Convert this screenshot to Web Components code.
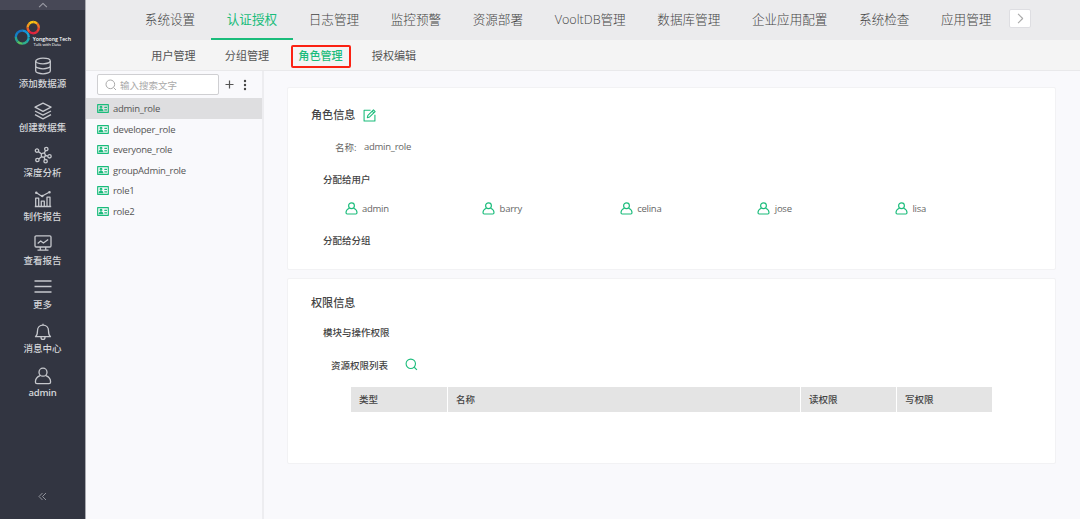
<!DOCTYPE html>
<html lang="zh-CN">
<head>
<meta charset="utf-8">
<title>角色管理</title>
<style>
  body {
    margin: 0;
    width: 1080px;
    height: 519px;
    overflow: hidden;
    display: flex;
    background: #f9f9fc;
    color: #666;
    font-family: "Open Sans", "Noto Sans CJK SC", sans-serif;
    font-size: 9.5px;
    --green: #1abc7b;
  }
  .main {
    flex: 1;
    min-width: 0;
    display: flex;
    flex-direction: column;
  }
  .body {
    flex: 1;
    display: flex;
  }
  .content {
    flex: 1;
    display: flex;
    flex-direction: column;
    gap: 8px;
    padding: 16px 24px 0 23px;
  }
</style>
</head>
<body>
<side-bar>
  <side-item icon="database">添加数据源</side-item>
  <side-item icon="layers">创建数据集</side-item>
  <side-item icon="network">深度分析</side-item>
  <side-item icon="chart">制作报告</side-item>
  <side-item icon="monitor">查看报告</side-item>
  <side-item icon="menu">更多</side-item>
  <side-item icon="bell">消息中心</side-item>
  <side-item icon="user" latin>admin</side-item>
</side-bar>
<div class="main">
  <top-nav>
    <nav-tab>系统设置</nav-tab>
    <nav-tab active>认证授权</nav-tab>
    <nav-tab>日志管理</nav-tab>
    <nav-tab>监控预警</nav-tab>
    <nav-tab>资源部署</nav-tab>
    <nav-tab>VooltDB管理</nav-tab>
    <nav-tab>数据库管理</nav-tab>
    <nav-tab>企业应用配置</nav-tab>
    <nav-tab>系统检查</nav-tab>
    <nav-tab>应用管理</nav-tab>
  </top-nav>
  <sub-nav>
    <sub-tab>用户管理</sub-tab>
    <sub-tab>分组管理</sub-tab>
    <sub-tab active>角色管理</sub-tab>
    <sub-tab>授权编辑</sub-tab>
  </sub-nav>
  <div class="body">
    <role-list placeholder="输入搜索文字">
      <role-item active>admin_role</role-item>
      <role-item>developer_role</role-item>
      <role-item>everyone_role</role-item>
      <role-item>groupAdmin_role</role-item>
      <role-item>role1</role-item>
      <role-item>role2</role-item>
    </role-list>
    <div class="content">
      <info-card style="height: 181px">
        <card-row level="1" icon="edit" style="height: 52px">角色信息</card-row>
        <card-field label="名称:">admin_role</card-field>
        <card-row level="2" style="height: 36px; margin-top: 8px">分配给用户</card-row>
        <user-grid>
          <user-chip>admin</user-chip>
          <user-chip>barry</user-chip>
          <user-chip>celina</user-chip>
          <user-chip>jose</user-chip>
          <user-chip>lisa</user-chip>
        </user-grid>
        <card-row level="2" style="height: 42px">分配给分组</card-row>
      </info-card>
      <info-card style="height: 184px">
        <card-row level="1" style="height: 46px">权限信息</card-row>
        <card-row level="2" style="height: 14px">模块与操作权限</card-row>
        <card-row level="3" icon="search" style="height: 45px; margin-top: 3px">资源权限列表</card-row>
        <perm-table columns="类型,名称,读权限,写权限"></perm-table>
      </info-card>
    </div>
  </div>
</div>

<script>
const ICONS = {
  database: `<ellipse cx="9" cy="4" rx="7.3" ry="2.8"/><path d="M1.7 4v10c0 1.5 3.3 2.8 7.3 2.8s7.3-1.3 7.3-2.8V4M1.7 9c0 1.5 3.3 2.8 7.3 2.8s7.3-1.3 7.3-2.8"/>`,
  layers: `<path d="M9 1.2 17 5.2 9 9.3 1 5.2zM1 9l8 4.1L17 9M1 12.7l8 4.1 8-4.1"/>`,
  network: `<circle cx="9.3" cy="9.2" r="2"/><circle cx="3" cy="4.6" r="1.7"/><circle cx="12.3" cy="3" r="1.7"/><circle cx="15.5" cy="10.3" r="1.7"/><circle cx="11.6" cy="15.2" r="1.7"/><circle cx="3.4" cy="14" r="1.7"/><path d="m4.4 5.6 3.3 2.4M10.1 7.4l1.5-2.8M11.3 9.5l2.5.5M10.1 11.1l.8 2.5M7.8 10.5 4.7 12.9"/>`,
  chart: `<path d="M1.7 16.5V8.2h3v8.3M7.3 16.5v-5.3h3v5.3M13 16.5V7.2h3v9.3M.8 16.5h16.4M2 2.5 7.8 6.3 15.6 2"/><circle cx="2.3" cy="2.8" r=".6"/><circle cx="8.3" cy="6" r=".6"/><circle cx="15.5" cy="2.2" r=".6"/>`,
  monitor: `<rect x="1" y="1.8" width="16" height="11.2" rx="1.2"/><path d="m3.7 9.5 3-2.5 2.7 2 4.8-3.6M6.3 13v3M11.7 13v3M3.5 16.2h11"/>`,
  menu: `<path d="M.5 3h17M.5 8.5h17M.5 14h17"/>`,
  bell: `<path d="M1.5 13.7c2-1.5 2-3.3 2-6C3.5 4.5 5.7 2.2 9 2.2s5.5 2.3 5.5 5.5c0 2.7 0 4.500 2 6zM7 14.2c0 3 4 3 4 0M9 .8v1.3"/>`,
  user: `<circle cx="9" cy="5.2" r="4"/><path d="M6.2 8.7C3.3 9.700 1.4 12 1.4 15c0 1 .6 1.6 1.6 1.6h12c1 0 1.6-.6 1.6-1.6 0-3-1.9-5.300-4.800-6.300"/>`,
  search: `<circle cx="8" cy="8" r="6.5"/><path d="m12.8 12.8 3.7 3.7"/>`,
  edit: `<path d="M10.5 1.8H1.5v14.7h15V8M6 12l.8-3.3L14.5 1.2l2.3 2.3L9.2 11z"/><path d="m12.7 3 2.300 2.300"/>`,
  card: `<rect x="1" y="1" width="16" height="11.5"/><circle cx="6" cy="4.8" r="1.3"/><path d="M3.2 10c0-2.7 5.6-2.7 5.6 0zM11 5h4M11 8.8h4"/>`,
  plus: `<path d="M9 1v16M1 9h16"/>`,
  up: `<path d="m2 13 7-7 7 7"/>`,
  right: `<path d="m5 1.5 7.5 7.5L5 16.5"/>`,
  collapse: `<path d="M9 2 2 9l7 7M16 2 9 9l7 7"/>`
};

function icon(name, width, stroke, height) {
  const box = name === "card" ? "0 0 18 13.5" : "0 0 18 18";
  return `<svg width="${width}" height="${height || width}" viewBox="${box}" fill="none"
    stroke="currentColor" stroke-width="${stroke}" stroke-linejoin="round">${ICONS[name]}</svg>`;
}

// Ring made of equal coloured arcs, clockwise from the right
function ring(cx, cy, r, colors) {
  return colors.map((color, i) =>
    `<circle cx="${cx}" cy="${cy}" r="${r}" stroke="${color}" pathLength="${colors.length}"
      stroke-dasharray="1.03 ${colors.length - 1.03}" stroke-dashoffset="${-i}"/>`
  ).join("");
}

// Shared base: every element only supplies its template
class BaseElement extends HTMLElement {
  constructor() {
    super();
    this.attachShadow({ mode: "open" });
  }
  connectedCallback() {
    this.shadowRoot.innerHTML = this.template();
  }
}

class SideBar extends BaseElement {
  template() {
    return `
      <style>
        :host {
          box-sizing: border-box;
          width: 86px;
          height: 519px;
          flex: none;
          display: flex;
          flex-direction: column;
          background: #323541;
          border-right: 1px solid #a9aab0;
          color: #d4d5d9;
        }
        .fold {
          height: 9.5px;
          display: flex;
          align-items: center;
          justify-content: center;
          background: #474856;
          color: #9a9ba4;
        }
        .logo { height: 44.7px; }
        .logo svg { display: block; }
        .items { flex: 1; }
        .collapse {
          height: 45px;
          display: flex;
          justify-content: center;
          align-items: center;
          color: #a3a5ac;
        }
      </style>
      <div class="fold">${icon("up", 10, 2)}</div>
      <div class="logo">
        <svg width="85" height="44" viewBox="0 9.5 85 44" fill="none" stroke-width="2.4">
          ${ring(33.2, 27.1, 5.6, ["#e8402f", "#e02a3c", "#e0203f", "#ee5a2a", "#f59a1e", "#fbc512", "#fbb914", "#f0702a"])}
          ${ring(22.3, 36.6, 6.5, ["#19a7b5", "#2fb08f", "#55bf62", "#2aa58c", "#1480c4", "#1274c8", "#1590d6", "#19a9d8"])}
          <g fill="#fff" stroke="none" font-family="Open Sans, sans-serif">
            <text x="32.8" y="40.3" font-size="6" font-weight="600" textLength="38.2" lengthAdjust="spacingAndGlyphs">Yonghong Tech</text>
            <text x="33.5" y="45.8" font-size="4.3" textLength="27.5">Talk with Data</text>
          </g>
        </svg>
      </div>
      <div class="items"><slot></slot></div>
      <div class="collapse">${icon("collapse", 9, 1.7)}</div>
    `;
  }
}

class SideItem extends BaseElement {
  template() {
    return `
      <style>
        :host {
          display: flex;
          flex-direction: column;
          align-items: center;
          height: 44.2px;
          padding-top: 3.3px;
          box-sizing: border-box;
        }
        svg { display: block; color: #c6c8cd; }
        span {
          margin-top: .7px;
          line-height: 16px;
          white-space: nowrap;
          font-weight: 500;
        }
        :host([latin]) span { letter-spacing: -.2px; font-weight: 600; }
      </style>
      ${icon(this.getAttribute("icon"), 18, 1.3)}
      <span><slot></slot></span>
    `;
  }
}

class TopNav extends BaseElement {
  template() {
    return `
      <style>
        :host {
          display: flex;
          height: 39.5px;
          padding-left: 43px;
          background: #ebebed;
          font-size: 12.6px;
        }
        .next {
          box-sizing: border-box;
          width: 22px;
          height: 19px;
          margin: 8.5px 0 0 2px;
          border: 1px solid #dedee2;
          border-radius: 2px;
          background: #fff;
          color: #aaa;
          display: flex;
          align-items: center;
          justify-content: center;
        }
      </style>
      <slot></slot>
      <div class="next">${icon("right", 11, 1.8)}</div>
    `;
  }
}

class NavTab extends BaseElement {
  template() {
    return `
      <style>
        :host {
          box-sizing: border-box;
          display: block;
          padding: 0 15.8px;
          line-height: 40px;
          height: 39.5px;
          border-bottom: 2.5px solid transparent;
          white-space: nowrap;
          font-weight: 300;
          color: #444;
        }
        :host([active]) {
          color: var(--green);
          border-color: var(--green);
          font-weight: 400;
        }
      </style>
      <slot></slot>
    `;
  }
}

class SubNav extends BaseElement {
  template() {
    return `
      <style>
        :host {
          box-sizing: border-box;
          display: flex;
          gap: 13.5px;
          height: 31.5px;
          padding: 5.5px 0 0 57.5px;
          background: #f4f4f4;
          border-bottom: 1px solid #e9e9eb;
          font-size: 11.1px;
          color: #555;
        }
      </style>
      <slot></slot>
    `;
  }
}

class SubTab extends BaseElement {
  template() {
    return `
      <style>
        :host {
          box-sizing: border-box;
          display: block;
          width: 60px;
          height: 23px;
          line-height: 18px;
          text-align: center;
          white-space: nowrap;
          border: 2px solid transparent;
          border-radius: 2px;
        }
        :host([active]) {
          color: var(--green);
          border-color: #fb2213;
          font-weight: 500;
        }
      </style>
      <slot></slot>
    `;
  }
}

class RoleList extends BaseElement {
  template() {
    return `
      <style>
        :host {
          box-sizing: border-box;
          width: 178px;
          flex: none;
          display: block;
          border-right: 2px solid #ededf0;
        }
        .tools {
          display: flex;
          align-items: center;
          height: 27.3px;
          padding-left: 11px;
        }
        .search {
          box-sizing: border-box;
          width: 122px;
          height: 21px;
          display: flex;
          align-items: center;
          gap: 3px;
          padding-left: 7px;
          border: 1px solid #cfcfd2;
          border-radius: 2px;
          background: #fff;
          color: #aaa;
        }
        .plus { margin-left: 6px; color: #555; display: flex; }
        .dots { margin-left: 9px; color: #444; display: flex; }
      </style>
      <div class="tools">
        <div class="search">${icon("search", 12, 1.5)}<span>${this.getAttribute("placeholder")}</span></div>
        <div class="plus">${icon("plus", 9, 2.4)}</div>
        <div class="dots">
          <svg width="4" height="12" fill="currentColor"><circle cx="2" cy="2" r="1.2"/><circle cx="2" cy="6" r="1.2"/><circle cx="2" cy="10" r="1.2"/></svg>
        </div>
      </div>
      <slot></slot>
    `;
  }
}

class RoleItem extends BaseElement {
  template() {
    return `
      <style>
        :host {
          display: flex;
          align-items: center;
          gap: 4px;
          height: 20.5px;
          padding-left: 11px;
          color: #555;
          letter-spacing: -.26px;
        }
        :host([active]) { background: #dedee0; }
        svg { color: var(--green); }
      </style>
      ${icon("card", 12, 1.7, 9)}
      <span><slot></slot></span>
    `;
  }
}

class InfoCard extends BaseElement {
  template() {
    return `
      <style>
        :host {
          display: flex;
          flex-direction: column;
          background: #fff;
          border: 1px solid #f2f2f4;
          border-radius: 2px;
        }
      </style>
      <slot></slot>
    `;
  }
}

class CardRow extends BaseElement {
  template() {
    const name = this.getAttribute("icon");
    return `
      <style>
        :host {
          display: flex;
          align-items: center;
          color: #444;
          font-weight: 500;
          flex: none;
        }
        :host([level="1"]) { padding-left: 23px; font-size: 11.1px; gap: 8px; }
        :host([level="2"]) { padding-left: 35px; }
        :host([level="3"]) { padding-left: 43px; gap: 17px; }
        :host([icon="edit"]) svg { margin-top: 2px; }
        svg { color: var(--green); }
      </style>
      <span><slot></slot></span>
      ${name ? icon(name, 13, 1.5) : ""}
    `;
  }
}

class CardField extends BaseElement {
  template() {
    return `
      <style>
        :host {
          display: flex;
          align-items: center;
          height: 13px;
          padding-left: 47px;
        }
        label { width: 29px; }
        span { letter-spacing: -.26px; }
      </style>
      <label>${this.getAttribute("label")}</label>
      <span><slot></slot></span>
    `;
  }
}

class UserGrid extends BaseElement {
  template() {
    return `
      <style>
        :host {
          display: grid;
          grid-template-columns: repeat(5, 137.6px);
          height: 22px;
          padding-left: 56.5px;
        }
      </style>
      <slot></slot>
    `;
  }
}

class UserChip extends BaseElement {
  template() {
    return `
      <style>
        :host {
          display: flex;
          align-items: center;
          gap: 4.5px;
          letter-spacing: -.26px;
        }
        svg { color: var(--green); }
      </style>
      ${icon("user", 13, 1.6)}
      <span><slot></slot></span>
    `;
  }
}

class PermTable extends BaseElement {
  template() {
    const cells = this.getAttribute("columns").split(",").map(c => `<div>${c}</div>`).join("");
    return `
      <style>
        :host {
          display: grid;
          grid-template-columns: 96px 352px 95px 95px;
          gap: 1px;
          height: 25px;
          line-height: 25px;
          margin-left: 63px;
          color: #444;
          font-weight: 500;
        }
        div { padding-left: 8px; background: #e4e4e4; }
      </style>
      ${cells}
    `;
  }
}

customElements.define("side-bar", SideBar);
customElements.define("side-item", SideItem);
customElements.define("top-nav", TopNav);
customElements.define("nav-tab", NavTab);
customElements.define("sub-nav", SubNav);
customElements.define("sub-tab", SubTab);
customElements.define("role-list", RoleList);
customElements.define("role-item", RoleItem);
customElements.define("info-card", InfoCard);
customElements.define("card-row", CardRow);
customElements.define("card-field", CardField);
customElements.define("user-grid", UserGrid);
customElements.define("user-chip", UserChip);
customElements.define("perm-table", PermTable);
</script>
</body>
</html>
